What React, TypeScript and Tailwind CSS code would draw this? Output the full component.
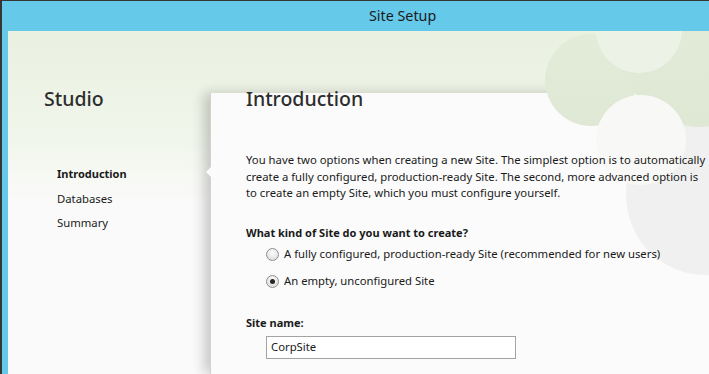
import React from "react";

const FONT = { fontFamily: '"Noto Sans", "Open Sans", sans-serif' };

function Radio({ checked, label }: { checked?: boolean; label: string }) {
  return (
    <div className="flex items-center h-[27px] ml-[20px]">
      <span className="relative w-[13px] h-[13px] rounded-full border border-[#8e8f8f] bg-[radial-gradient(circle_at_50%_35%,#fbfbfb_0%,#e6e6e6_60%,#d4d4d4_100%)] flex items-center justify-center shrink-0">
        {checked && <span className="w-[5px] h-[5px] rounded-full bg-[#262626]" />}
      </span>
      <span className="ml-[5px] text-[11.3px] text-[#1a1a1a] whitespace-nowrap leading-[16px]">{label}</span>
    </div>
  );
}

export default function App() {
  return (
    <div className="w-[709px] h-[374px] bg-[#363636] pl-[2px] pt-px overflow-hidden" style={FONT}>
      <div className="w-full h-full bg-[#65c9ea] flex flex-col">
        <div className="h-[30px] shrink-0 flex items-center pl-[367px]">
          <span className="text-[14.3px] text-[#1b1b1b] leading-none">Site Setup</span>
        </div>
        <div className="flex-1 ml-[6px] relative flex bg-[linear-gradient(to_bottom,#eaf1e1_0px,#eff5e9_95px,#f3f7ef_125px,#f7f9f4_145px,#fafafa_175px)] overflow-hidden">
          {/* left column */}
          <div className="w-[202px] shrink-0 flex flex-col pl-[36px] pt-[56px]">
            <div className="text-[19.5px] leading-[24px] font-medium text-[#2d2d2d]">Studio</div>
            <div className="mt-[51px] pl-[13px] flex flex-col text-[11.3px] text-[#1a1a1a]">
              <div className="leading-[24.5px] font-bold text-[11px]">Introduction</div>
              <div className="leading-[24.5px]">Databases</div>
              <div className="leading-[24.5px]">Summary</div>
            </div>
          </div>

          {/* right column */}
          <div className="flex-1 flex flex-col">
            <div className="h-[62px] shrink-0" />
            <div className="flex-1 relative bg-[#fbfbfb] shadow-[-6px_0_12px_rgba(0,0,0,0.2)] border-l border-[#d2d2d2]">
              {/* pointer notch */}
              <div className="absolute left-[-5px] top-[74px] w-0 h-0 border-y-[5px] border-y-transparent border-r-[5px] border-r-[#fbfbfb]" />
              {/* decoration */}
              <svg className="absolute left-[-210px] top-[-93px] w-[709px] h-[374px] pointer-events-none" viewBox="0 0 709 374">
                <defs>
                  <linearGradient id="g" x1="0" y1="0" x2="0" y2="1">
                    <stop offset="0" stopColor="#e3ebd9" />
                    <stop offset="1" stopColor="#dfe8d5" />
                  </linearGradient>
                </defs>
                <circle cx="705" cy="195" r="80" fill="#f0f0f0" />
                <circle cx="590" cy="80" r="46" fill="url(#g)" />
                <circle cx="700" cy="45" r="82" fill="url(#g)" />
                <circle cx="638" cy="30" r="43" fill="#edf2e6" />
                <circle cx="640" cy="140" r="45" fill="#f8f9f6" />
              </svg>
              <div className="relative z-10 pl-[35px] flex flex-col">
                <div className="-mt-[6px] text-[19.5px] leading-[24px] font-medium text-[#2d2d2d]">Introduction</div>
                <p className="mt-[41px] text-[11.3px] leading-[16.5px] text-[#1a1a1a] whitespace-nowrap">
                  You have two options when creating a new Site. The simplest option is to automatically
                  <br />
                  create a fully configured, production-ready Site. The second, more advanced option is
                  <br />
                  to create an empty Site, which you must configure yourself.
                </p>
                <div className="mt-[23px] text-[11px] leading-[16px] font-bold text-[#1a1a1a]">
                  What kind of Site do you want to create?
                </div>
                <div className="flex flex-col">
                  <Radio label="A fully configured, production-ready Site (recommended for new users)" />
                  <Radio checked label="An empty, unconfigured Site" />
                </div>
                <div className="mt-[20px] text-[11px] leading-[16px] font-bold text-[#1a1a1a]">Site name:</div>
                <div className="mt-[5px] ml-[20px] w-[250px] h-[23px] border border-[#a3a3a3] bg-white flex items-center pl-[4px]">
                  <span className="text-[11.3px] text-[#1a1a1a] leading-none">CorpSite</span>
                </div>
              </div>
            </div>
          </div>
        </div>
      </div>
    </div>
  );
}
